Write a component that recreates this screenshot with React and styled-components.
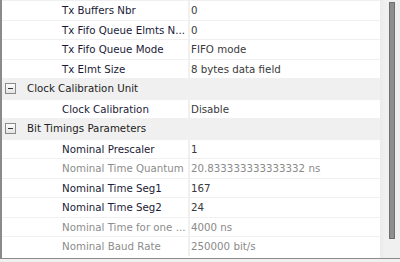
import React from "react";
import styled, { createGlobalStyle } from "styled-components";

const GlobalStyle = createGlobalStyle`
  html, body { margin: 0; padding: 0; background: #f0f0f0; }
  body { font-family: "DejaVu Sans", "Liberation Sans", sans-serif; }
`;

const Frame = styled.div`
  width: 400px;
  height: 262px;
  display: flex;
  flex-direction: column;
  background: #f0f0f0;
  overflow: hidden;
`;

const Panel = styled.div`
  display: flex;
  flex-direction: row;
  height: 259px;
  box-sizing: border-box;
  border-left: 2px solid #8a8a8a;
  border-bottom: 1px solid #8a8a8a;
  background: #ffffff;
`;

const Grid = styled.div`
  width: 378px;
  display: flex;
  flex-direction: column;
  background: #ffffff;
  border-right: 3px solid #ececec;
  overflow: hidden;
`;

const Row = styled.div`
  flex: none;
  height: 19.5px;
  box-sizing: border-box;
  border-top: 1px solid #f0f0f0;
  display: grid;
  grid-template-columns: 188px 1fr;
  align-items: center;
  font-size: 10.25px;
  white-space: nowrap;
`;

const NameCell = styled.div`
  padding-left: 60px;
  height: 100%;
  display: flex;
  align-items: center;
  border-right: 2px solid #f0f0f0;
  color: ${(p) => (p.$disabled ? "#8c8c8c" : "#1a1a36")};
  overflow: hidden;
`;

const ValueCell = styled.div`
  padding-left: 1px;
  height: 100%;
  display: flex;
  align-items: center;
  color: ${(p) => (p.$disabled ? "#8a8a8a" : "#3a3a3a")};
  overflow: hidden;
`;

const GroupRow = styled.div`
  flex: none;
  height: 20.5px;
  box-sizing: border-box;
  background: #f0f0f0;
  display: flex;
  align-items: center;
  gap: 11px;
  padding-left: 3px;
  font-size: 10.25px;
  color: #222222;
  white-space: nowrap;
`;

const Track = styled.div`
  flex: 1;
  background: #f0f0f0;
  padding-top: 2px;
  display: flex;
  justify-content: center;
`;

const Thumb = styled.div`
  width: 6px;
  height: 237px;
  box-sizing: border-box;
  background: #8e8e8e;
  border: 1px solid #6f6f6f;
`;

const MinusIcon = () => (
  <svg width="11" height="11" viewBox="0 0 11 11">
    <defs>
      <linearGradient id="mg" x1="0" y1="0" x2="0" y2="1">
        <stop offset="0" stopColor="#ffffff" />
        <stop offset="1" stopColor="#e2e2e2" />
      </linearGradient>
    </defs>
    <rect x="0.5" y="0.5" width="10" height="10" fill="url(#mg)" stroke="#8a8a8a" />
    <rect x="3" y="5" width="5" height="1" fill="#333333" />
  </svg>
);

const items = [
  { name: "Tx Buffers Nbr", value: "0" },
  { name: "Tx Fifo Queue Elmts N...", value: "0" },
  { name: "Tx Fifo Queue Mode", value: "FIFO mode" },
  { name: "Tx Elmt Size", value: "8 bytes data field" },
  { group: "Clock Calibration Unit" },
  { name: "Clock Calibration", value: "Disable" },
  { group: "Bit Timings Parameters" },
  { name: "Nominal Prescaler", value: "1" },
  { name: "Nominal Time Quantum", value: "20.833333333333332 ns", disabled: true },
  { name: "Nominal Time Seg1", value: "167" },
  { name: "Nominal Time Seg2", value: "24" },
  { name: "Nominal Time for one ...", value: "4000 ns", disabled: true },
  { name: "Nominal Baud Rate", value: "250000 bit/s", disabled: true },
];

export default function App() {
  return (
    <Frame>
      <GlobalStyle />
      <Panel>
        <Grid>
          {items.map((it, i) =>
            it.group ? (
              <GroupRow key={i}>
                <MinusIcon />
                <span>{it.group}</span>
              </GroupRow>
            ) : (
              <Row key={i}>
                <NameCell $disabled={it.disabled}>{it.name}</NameCell>
                <ValueCell $disabled={it.disabled}>{it.value}</ValueCell>
              </Row>
            )
          )}
        </Grid>
        <Track>
          <Thumb />
        </Track>
      </Panel>
    </Frame>
  );
}
